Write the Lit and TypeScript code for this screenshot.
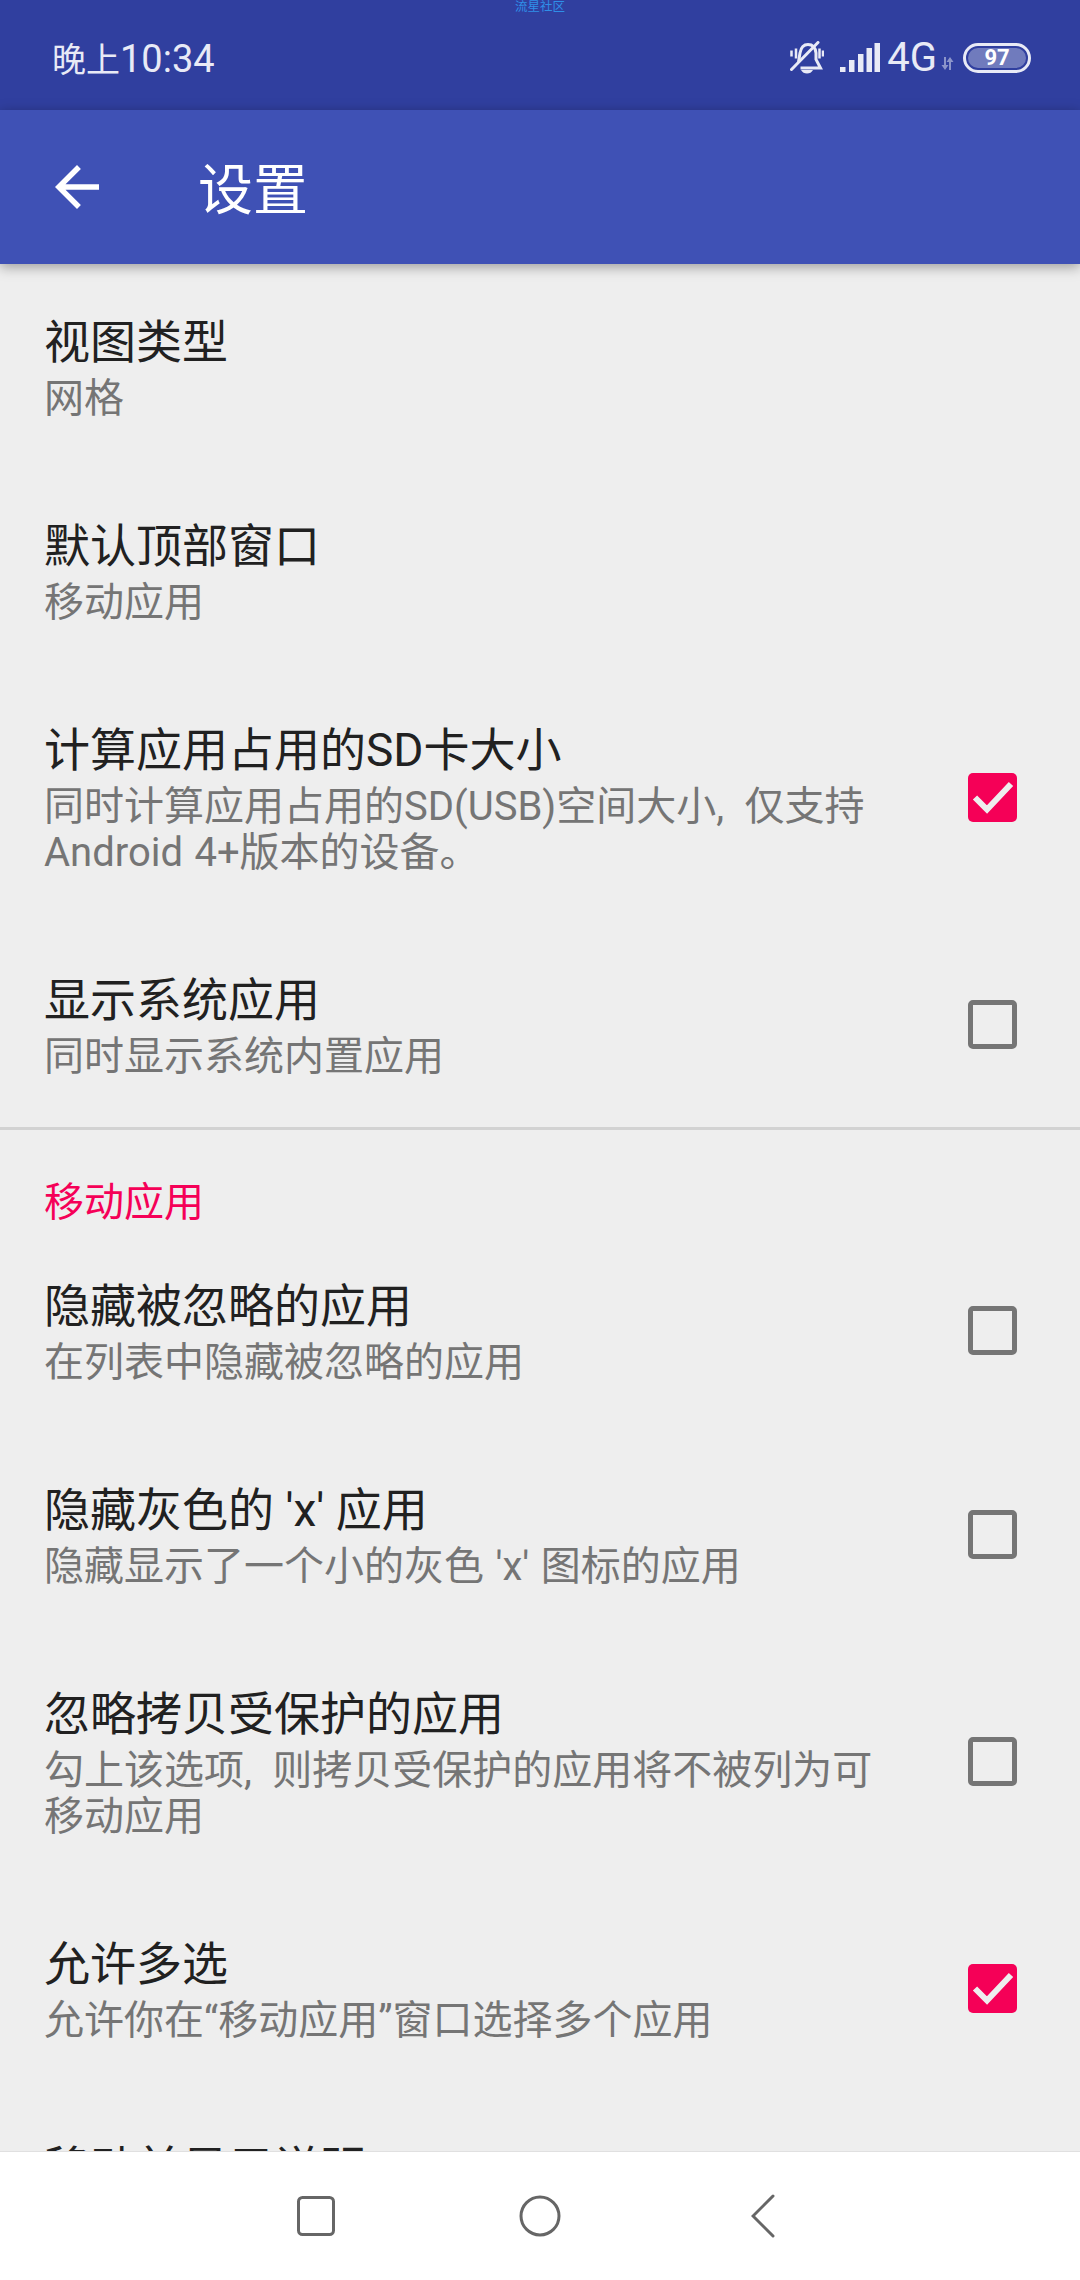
import { LitElement, css, html, svg } from 'lit'
import { customElement } from 'lit/decorators.js'

interface Pref {
  title: string
  summary: string
  checked?: boolean
}

const general: Pref[] = [
  { title: '视图类型', summary: '网格' },
  { title: '默认顶部窗口', summary: '移动应用' },
  {
    title: '计算应用占用的SD卡大小',
    summary: '同时计算应用占用的SD(USB)空间大小,\u2002仅支持 Android 4+版本的设备。',
    checked: true,
  },
  { title: '显示系统应用', summary: '同时显示系统内置应用', checked: false },
]

const moving: Pref[] = [
  { title: '隐藏被忽略的应用', summary: '在列表中隐藏被忽略的应用', checked: false },
  { title: "隐藏灰色的 'x' 应用", summary: "隐藏显示了一个小的灰色 'x' 图标的应用", checked: false },
  {
    title: '忽略拷贝受保护的应用',
    summary: '勾上该选项,\u2002则拷贝受保护的应用将不被列为可移动应用',
    checked: false,
  },
  { title: '允许多选', summary: '允许你在“移动应用”窗口选择多个应用', checked: true },
  { title: '移动前显示说明', summary: '移动应用前显示说明', checked: false },
]

const signalBars = [
  [0, 5],
  [9, 12],
  [18, 18],
  [26.5, 24],
  [34.5, 29],
]

@customElement('app-root')
export class AppRoot extends LitElement {
  private renderPref(pref: Pref) {
    return html`
      <div class="pref">
        <div class="text">
          <div class="title">${pref.title}</div>
          <div class="summary">${pref.summary}</div>
        </div>
        ${pref.checked === undefined
          ? ''
          : html`<div class="box ${pref.checked ? 'checked' : ''}">
              ${pref.checked
                ? html`<svg width="49" height="49" viewBox="0 0 49 49">
                    <path d="M7 24.5 19 36.5 43 11" fill="none" stroke="#eee" stroke-width="6" />
                  </svg>`
                : ''}
            </div>`}
      </div>
    `
  }

  render() {
    return html`
      <div class="status">
        <span class="watermark">流星社区</span>
        <span class="time">晚上<span class="digits">10:34</span></span>
        <div class="indicators">
          <svg width="34" height="33" viewBox="0 0 34 33" fill="none" stroke="#e8eaf6" stroke-width="3">
            <path d="M8.500 21 10 12Q11.500 3.500 18 3.500 25 3.500 26 12V18.500L30.500 27H10.500" />
            <path d="M1.500 28.500 28 1.500" stroke-linecap="round" />
            <path d="M1.500 9.500V15.500M6 7.500V17.500M29.500 7.500V17.500M33 9.500V15.500" stroke-width="2.500" />
            <path d="M11 29H23Q21 32.500 17 32.500 13 32.500 11 29Z" fill="#e8eaf6" stroke="none" />
          </svg>
          <svg class="signal" width="40" height="29" viewBox="0 0 40 29" fill="#e8eaf6">
            ${signalBars.map(([x, h]) => svg`<rect x=${x} y=${29 - h} width="5.500" height=${h} />`)}
          </svg>
          <span class="net">4G</span>
          <svg class="arrows" width="13" height="13" viewBox="0 0 13 13" fill="#e8eaf6" opacity="0.5">
            <path d="M3 0H5V8H7.500L4 13 .5 8H3ZM8 13H10V5H12.500L9 0 5.500 5H8Z" />
          </svg>
          <div class="battery"><span>97</span></div>
        </div>
      </div>

      <div class="appbar">
        <svg width="66" height="66" viewBox="0 0 24 24" fill="#fff">
          <path d="M20 11H7.830l5.590-5.590L12 4l-8 8 8 8 1.410-1.410L7.830 13H20v-2z" />
        </svg>
        <span class="heading">设置</span>
      </div>

      <div class="content">
        ${general.map((p) => this.renderPref(p))}
        <div class="section">移动应用</div>
        ${moving.map((p) => this.renderPref(p))}
      </div>

      <div class="nav">
        <div class="slot">
          <svg width="38" height="40" viewBox="0 0 38 40" fill="none" stroke="#666" stroke-width="3">
            <rect x="1.500" y="1.500" width="35" height="37" rx="4" />
          </svg>
        </div>
        <div class="slot">
          <svg width="42" height="42" viewBox="0 0 42 42" fill="none" stroke="#666" stroke-width="3">
            <circle cx="21" cy="21" r="19" />
          </svg>
        </div>
        <div class="slot">
          <svg width="26" height="44" viewBox="0 0 26 44" fill="none" stroke="#666" stroke-width="3" stroke-linecap="round">
            <path d="M22 2 2 22 22 42" />
          </svg>
        </div>
      </div>
    `
  }

  static styles = css`
    :host {
      display: flex;
      flex-direction: column;
      height: 2280px;
      overflow: hidden;
      background: #eee;
      font-family: Roboto, 'Noto Sans CJK SC', sans-serif;
    }

    .status {
      position: relative;
      flex: none;
      display: flex;
      align-items: center;
      justify-content: space-between;
      height: 110px;
      padding: 5px 49px 0 52px;
      box-sizing: border-box;
      background: #303f9f;
      color: #e8eaf6;
    }
    .watermark {
      position: absolute;
      top: 0;
      left: 515px;
      font-size: 12.500px;
      line-height: 14px;
      color: #2f8fe8;
    }
    .time {
      margin-top: 4px;
      font-size: 34px;
      line-height: 40px;
    }
    .digits {
      font-size: 38px;
    }
    .indicators {
      display: flex;
      align-items: center;
    }
    .signal {
      margin-left: 16px;
    }
    .net {
      margin-left: 7px;
      font-size: 40px;
      line-height: 40px;
    }
    .arrows {
      margin: 12px 9px 0 4px;
    }
    .battery {
      display: flex;
      align-items: center;
      justify-content: center;
      width: 68px;
      height: 30px;
      box-sizing: border-box;
      border: 3px solid #e8eaf6;
      border-radius: 15px;
      padding: 2px;
    }
    .battery span {
      flex: 1;
      height: 100%;
      border-radius: 10px;
      background: rgba(232, 234, 246, 0.35);
      color: #fff;
      font-size: 22px;
      font-weight: 700;
      line-height: 20px;
      text-align: center;
    }

    .appbar {
      position: relative;
      z-index: 1;
      flex: none;
      display: flex;
      align-items: center;
      height: 154px;
      padding-left: 44px;
      box-sizing: border-box;
      background: #3f51b5;
      box-shadow: 0 3px 12px rgba(0, 0, 0, 0.35);
    }
    .heading {
      margin-left: 88px;
      margin-top: 6px;
      color: #fff;
      font-size: 55px;
      line-height: 70px;
    }

    .content {
      flex: 1;
      min-height: 0;
      overflow: hidden;
    }
    .pref {
      display: flex;
      align-items: center;
      padding: 44px 63px 46px 44px;
    }
    .text {
      flex: 1;
      min-width: 0;
      margin-right: 80px;
    }
    .title {
      color: #212121;
      font-size: 46px;
      line-height: 68px;
    }
    .summary {
      color: #757575;
      font-size: 40px;
      line-height: 46px;
      word-spacing: 1.500px;
    }
    .box {
      flex: none;
      width: 49px;
      height: 49px;
      margin-top: 2px;
      box-sizing: border-box;
      border: 5px solid #757575;
      border-radius: 5px;
    }
    .box.checked {
      border: none;
      background: #f50057;
    }
    .section {
      margin-top: 1px;
      padding: 50px 44px 2px;
      border-top: 3px solid #d2d2d2;
      color: #f50057;
      font-size: 40px;
      line-height: 46px;
    }

    .nav {
      flex: none;
      display: flex;
      align-items: center;
      justify-content: center;
      height: 129px;
      box-sizing: border-box;
      border-top: 1px solid #e0e0e0;
      background: #fff;
    }
    .slot {
      display: flex;
      justify-content: center;
      width: 224px;
    }
    svg {
      display: block;
    }
  `
}
